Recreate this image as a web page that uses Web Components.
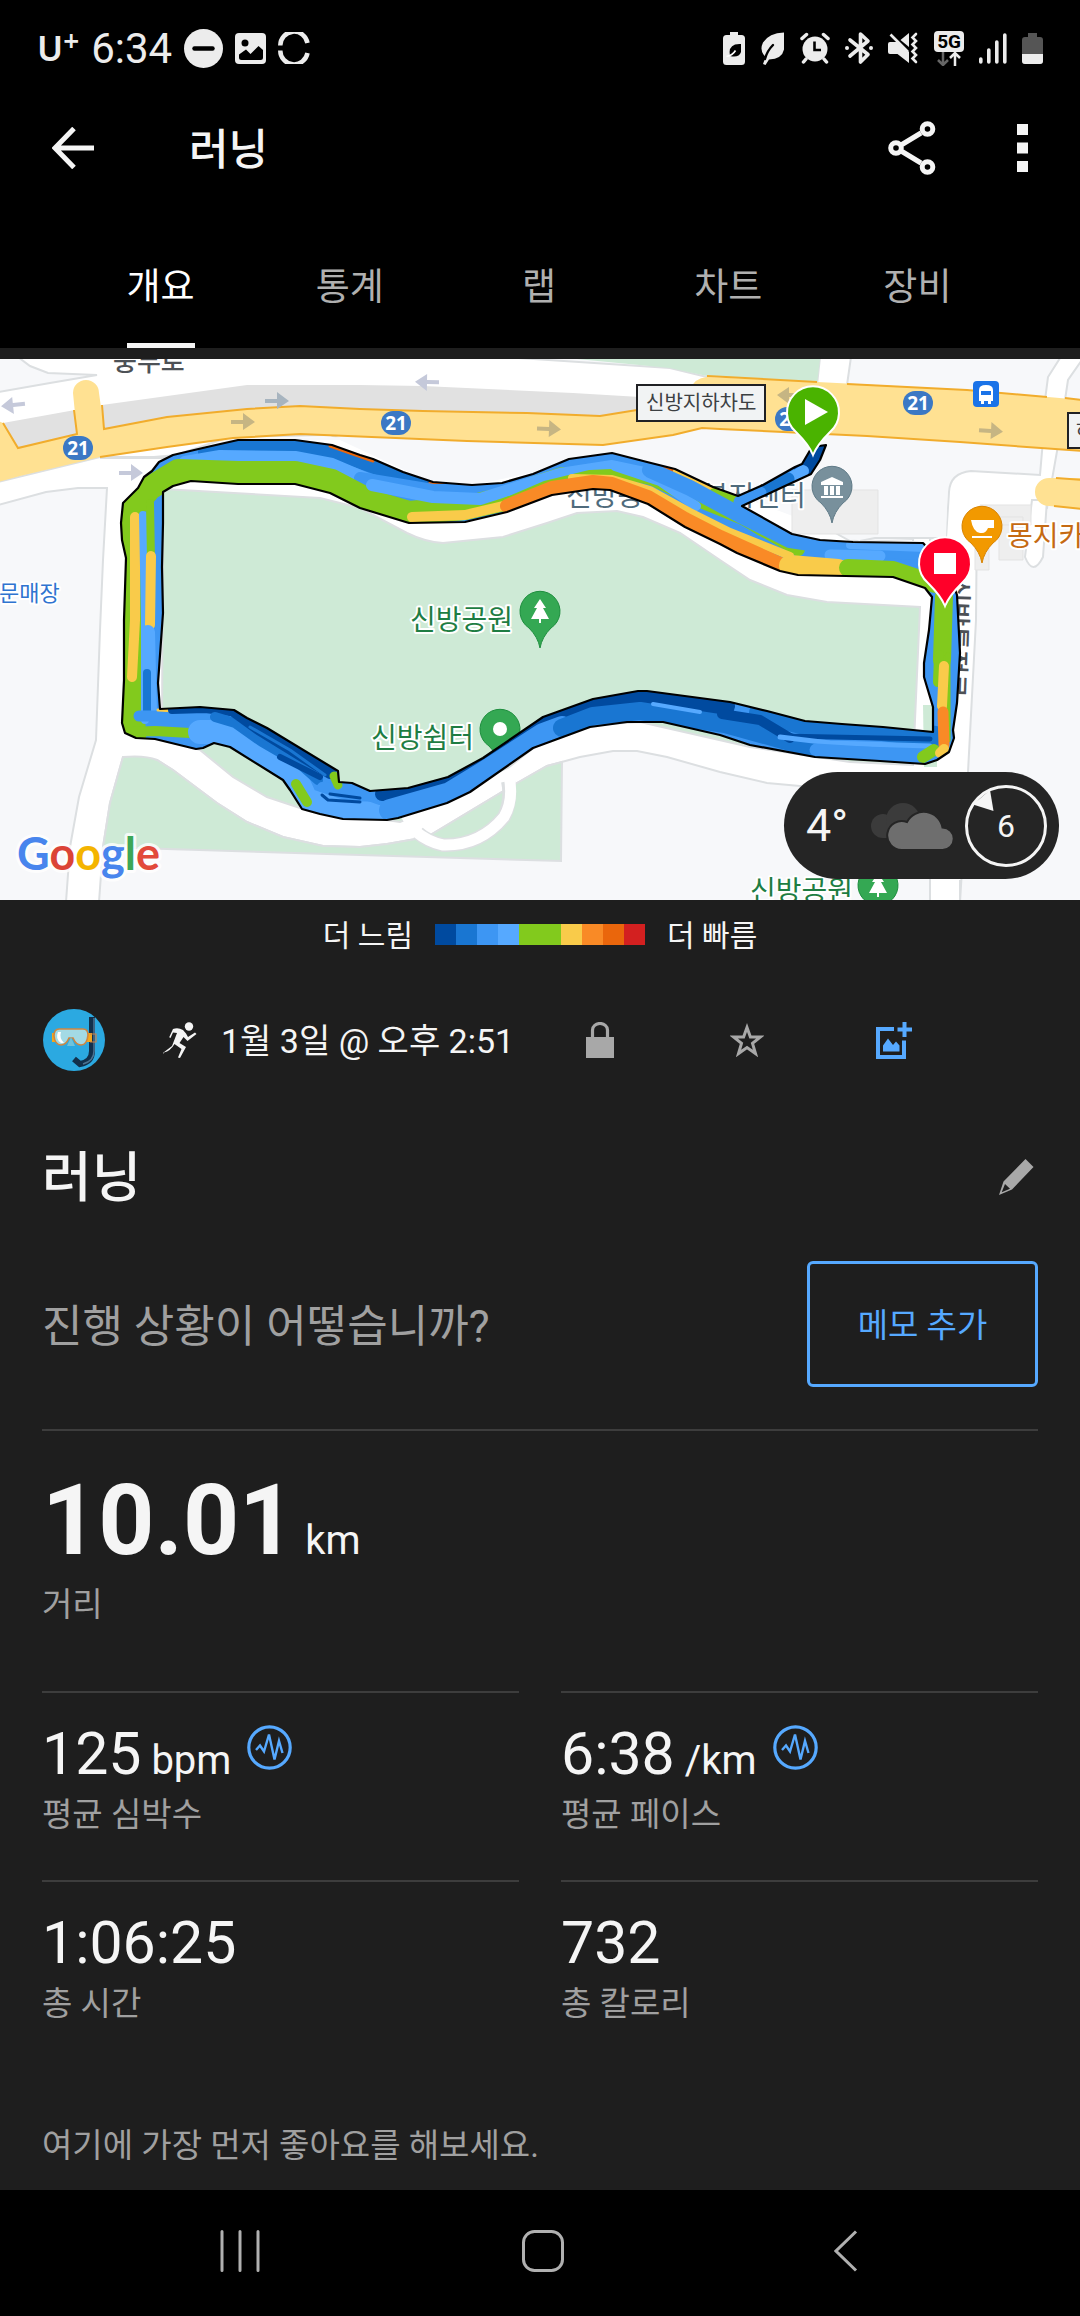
<!DOCTYPE html>
<html lang="ko">
<head>
<meta charset="utf-8">
<meta name="viewport" content="width=device-width, initial-scale=1">
<title>러닝</title>
<style>
html, body {
  margin: 0;
  background: #000;
}
body {
  font-family: Roboto, "Noto Sans CJK KR", sans-serif;
  color: #f5f5f5;
}
</style>
</head>
<body>
<activity-shell></activity-shell>

<script>
const icons = {
  dnd: [39, 39, '<circle cx="19.500" cy="19.500" r="19.500"/><path d="M10.500 19.500h18" stroke="#000" stroke-width="4.500" stroke-linecap="round"/>'],
  image: [31, 31, '<rect width="31" height="31" rx="4"/><circle cx="10" cy="10" r="3.500" fill="#000"/><path d="M4 24.500v-3l7-5 4.500 4.500 8-8 4.500 4v7.500q0 2.500-2.500 2.500h-19Q4 27 4 24.500z" fill="#000"/>'],
  ring: [32, 32, '<g fill="none" stroke="currentColor" stroke-width="4.500"><path d="M2.300 13.500A13.700 13.700 0 0 1 29.500 11"/><path d="M2.300 18.500A13.700 13.700 0 0 0 29.500 21"/></g>'],
  batteryLeaf: [22, 33, '<path d="M7 0h8v3h3.500Q22 3 22 6.500v23Q22 33 18.500 33h-15Q0 33 0 29.500v-23Q0 3 3.500 3H7z"/><path d="M18 12v8q-2 6-11 4-2-9 5-11.500 3-.8 6-.5z" fill="#000"/><path d="M3.500 24.500q6-1 9-6" fill="none" stroke="#fff" stroke-width="1.600"/>'],
  leaf: [25, 33, '<path d="M24 .5v17Q22 27 9 27.500L5.500 33 3 32 5.500 25Q-1 19 3 10.500 9 1 24 .5z"/><path d="M5 27q2-8 8-14" fill="none" stroke="#000" stroke-width="2.400" stroke-linecap="round"/>'],
  alarm: [30, 32, '<circle cx="15" cy="17" r="12.500"/><g fill="none" stroke="currentColor" stroke-width="3.500" stroke-linecap="round"><path d="M2 6.500l4.500-4M28 6.500l-4.500-4M6 27l-2.500 3M24 27l2.500 3"/></g><path d="M14.500 9.500v8.500H21" fill="none" stroke="#000" stroke-width="2.600"/>'],
  bluetooth: [28, 34, '<path d="M5 9l18 14.500L15.500 31V3L23 10 5 25" fill="none" stroke="currentColor" stroke-width="3.600" stroke-linejoin="round" stroke-linecap="round"/><circle cx="2" cy="17" r="2"/><circle cx="26" cy="17" r="2"/>'],
  mute: [31, 32, '<path d="M0 12q0-2 2-2h7l12 10v11L9.500 22H2q-2 0-2-2zM21 1v14l-8.500-7z"/><path d="M2.500 2.500L20 20" stroke="currentColor" stroke-width="2.600"/><path d="M28 2l-3.500 3.500L28 9l-3.500 3.500L28 16l-3.500 3.500L28 23l-3.500 3.500L28 30" fill="none" stroke="currentColor" stroke-width="2.600" stroke-linecap="round"/>'],
  signal: [28, 31, '<path d="M1.800 26v3M9.800 17v12M17.800 9v20M25.800 2v27" stroke="currentColor" stroke-width="3.600" stroke-linecap="round" fill="none"/>'],
  battery: [21, 31, '<path d="M6 0h9v4h3q3 0 3 3v21q0 3-3 3H3q-3 0-3-3V7q0-3 3-3h3z" fill="#555"/><path d="M0 21h21v7q0 3-3 3H3q-3 0-3-3z"/>'],
  arrowBack: [42, 42, '<path d="M22 1.500L3 21l19 19.500M3 21h39" fill="none" stroke="currentColor" stroke-width="5"/>'],
  share: [48, 54, '<g fill="none" stroke="currentColor" stroke-width="5"><path d="M14 23.500L33 12M14 30.500L33 42"/><circle cx="8" cy="27" r="5.300"/><circle cx="39.500" cy="8" r="5.300"/><circle cx="39.500" cy="46" r="5.300"/></g>'],
  more: [11, 49, '<path d="M0 0h11v11H0zM0 18.500h11v11H0zM0 37h11v11H0z"/>'],
  run: [34, 36, '<circle cx="26" cy="4.500" r="4.200"/><path d="M10 7q5-2 10 1l3 3.500 2 3.500 7-4.500 1.500 1.500-9 7-4-4-4 6 6.500 4-6 11-2-.5 3.500-8.500-7-5q-4 7-10.500 8.500L.5 32l-.3-1.200L9 24l5-13-4-.5-2.500 5.500-1.300-.8z"/>'],
  lock: [28, 36, '<path d="M0 15h28v21H0z"/><path d="M6.500 16V8a7.500 6.500 0 0 1 15 0v8" fill="none" stroke="currentColor" stroke-width="3.200"/>'],
  star: [34, 34, '<path d="M17 4.500l3.400 9.600h9.800l-7.700 6.300 3 10.200-8.500-6-8.500 6 3-10.200-7.700-6.300h9.800z" fill="none" stroke="currentColor" stroke-width="3"/>'],
  photoAdd: [36, 37, '<path d="M18 7H2v28h26V18.500" fill="none" stroke="currentColor" stroke-width="4"/><path d="M28.500 0v15M21.500 7.500h15" stroke="currentColor" stroke-width="4"/><path d="M7 29.500v-6l5-7 5 6.500 3-3.500 3.500 4v6z"/>'],
  pencil: [35, 36, '<path d="M26.500 0l8 8-21.500 22.500L0 36l4.500-13.500zM2.700 33.300l8.300-3.600-5-4.700z" fill-rule="evenodd"/>'],
  pulse: [45, 45, '<g fill="none" stroke="currentColor"><circle cx="22.500" cy="22.500" r="20.700" stroke-width="3.200"/><path d="M9 25l4-4.500 4 6 5-17 5.500 25 4.500-18.500 3.500 12" stroke-width="2.400"/></g>'],
  recents: [40, 42, '<path d="M2 1.500v39M20 1.500v39M38 1.500v39" stroke="currentColor" stroke-width="3" stroke-linecap="round"/>'],
  home: [42, 42, '<rect x="1.500" y="1.500" width="39" height="39" rx="11" fill="none" stroke="currentColor" stroke-width="3"/>'],
  navBack: [24, 42, '<path d="M22 1.500L2 21l20 19.500" fill="none" stroke="currentColor" stroke-width="3"/>'],
  clouds: [82, 48, '<g fill="#3b3b3b"><circle cx="12" cy="24" r="12"/><circle cx="32" cy="18" r="17"/><path d="M12 24h30v12H12z"/></g><path d="M31 48a14.500 14.500 0 1 1 5-28 19 19 0 0 1 35.500 5.500 11 11 0 0 1 0 22.500z" fill="#6e6e6e" stroke="#252525" stroke-width="2"/>'],
  wind: [82, 82, '<circle cx="41" cy="41" r="39.500" fill="none" stroke="currentColor" stroke-width="3"/><path d="M8 19.500L25 5l3.500 21z"/>'],
  avatar: [62, 62, `<circle cx="31" cy="31" r="31" fill="#2ba9e1"/>
    <path d="M49 8v34q0 11-12 13l-6-5" fill="none" stroke="#12304b" stroke-width="6"/>
    <path d="M51 9v33q0 10-11 13" fill="none" stroke="#4d7391" stroke-width="1.500"/>
    <path d="M9 24h5v9H9zM44 24h5v9h-5z" fill="#f4a81d"/><path d="M47 25h6v8h-6" fill="none" stroke="#c8814a" stroke-width="1.200"/>
    <path d="M16 20h24q5 0 5 6-1 10-7 10-5 0-8-7h-4q-3 7-8 7-6 0-7-9 0-7 5-7z" fill="#a3dae5" stroke="#cf8640" stroke-width="1.600"/>
    <path d="M15 23q-3 7 3 11h3q-5-5-3-11z" fill="#fff"/><path d="M28 28l4 9h-8z" fill="#6fc3dc"/>`]
}

const reset = `
button, a {
  display: flex;
  align-items: center;
  justify-content: center;
  margin: 0;
  padding: 0;
  border: 0;
  background: none;
  color: inherit;
  font: inherit;
  text-decoration: none;
}
`

const define = (name, template) => customElements.define(name, class extends HTMLElement {
  constructor() {
    super()
    this.attachShadow({mode: 'open'})
    this.shadowRoot.innerHTML = template
  }
})

customElements.define('app-icon', class extends HTMLElement {
  static get observedAttributes() {
    return ['name']
  }

  constructor() {
    super()
    this.attachShadow({mode: 'open'})
  }

  attributeChangedCallback(name, oldValue, newValue) {
    const [width, height, shape] = icons[newValue]
    this.shadowRoot.innerHTML = `
    <style>
    :host {
      display: inline-flex;
      flex: none;
    }
    svg {
      display: block;
    }
    </style>
    <svg width="${width}" height="${height}" viewBox="0 0 ${width} ${height}" fill="currentColor" aria-hidden="true">${shape}</svg>
    `
  }
})

define('status-bar', `
<style>
:host {
  display: flex;
  align-items: center;
  justify-content: space-between;
  height: 96px;
  padding: 0 37px;
  color: #ececec;
}
.left, .right {
  display: flex;
  align-items: center;
}
.left {
  gap: 12px;
  font-size: 42px;
}
.right {
  gap: 15px;
}
.carrier {
  display: flex;
  font: 600 35px "Noto Sans", sans-serif;
  line-height: 40px;
}
sup {
  font-size: 28px;
  line-height: 24px;
  vertical-align: top;
}
.network {
  display: grid;
  justify-items: center;
}
.badge {
  padding: 0 3px;
  border-radius: 4px;
  background: #ececec;
  color: #000;
  font-size: 19px;
  font-weight: 700;
  line-height: 21px;
}
</style>
<div class="left">
  <span class="carrier">U<sup>+</sup></span>
  <time>6:34</time>
  <app-icon name="dnd"></app-icon>
  <app-icon name="image"></app-icon>
  <app-icon name="ring"></app-icon>
</div>
<div class="right">
  <app-icon name="batteryLeaf"></app-icon>
  <app-icon name="leaf"></app-icon>
  <app-icon name="alarm"></app-icon>
  <app-icon name="bluetooth"></app-icon>
  <app-icon name="mute"></app-icon>
  <span class="network">
    <span class="badge">5G</span>
    <svg width="24" height="14" viewBox="0 0 24 14" fill="none" stroke-width="2.500"><path d="M6 0v12M1 8l5 5 5-5" stroke="#666"/><path d="M18 14V2M13 6l5-5 5 5" stroke="#ececec"/></svg>
  </span>
  <app-icon name="signal"></app-icon>
  <app-icon name="battery"></app-icon>
</div>
`)

define('app-bar', `
<style>
${reset}
:host {
  display: flex;
  align-items: center;
  height: 104px;
  padding: 0 52px;
}
h1 {
  flex: 1;
  margin: 0 0 0 95px;
  padding-top: 4px;
  font-size: 43px;
  font-weight: 500;
  line-height: 60px;
}
.actions {
  display: flex;
  gap: 81px;
}
</style>
<button type="button" aria-label="뒤로"><app-icon name="arrowBack"></app-icon></button>
<h1><slot></slot></h1>
<div class="actions">
  <button type="button" aria-label="공유"><app-icon name="share"></app-icon></button>
  <button type="button" aria-label="더보기"><app-icon name="more"></app-icon></button>
</div>
`)

define('tab-bar', `
<style>
:host {
  display: grid;
  grid-template-columns: repeat(5, 1fr);
  height: 148px;
  padding: 0 68px 0 66px;
  border-bottom: 11px solid #1e1e1e;
}
</style>
<slot></slot>
`)

define('tab-item', `
<style>
${reset}
:host {
  display: flex;
  justify-content: center;
  color: #b0b0b0;
}
button {
  box-sizing: border-box;
  padding-top: 24px;
  font-size: 37px;
  border-bottom: 5px solid transparent;
}
:host([selected]) {
  color: #fff;
}
:host([selected]) button {
  border-color: #f5f5f5;
}
</style>
<button type="button"><slot></slot></button>
`)

// Outline of all laps together: outer edge, then the hole in the middle.
const band = `M123 503L138 488 144 477 152 471 159 462 173 455 207 447 238 440 295 440 332 445 360 455 373 459 403 472 433 482 472 485 502 483 533 474 569 459 612 453 647 462 675 469 713 487 738 496 763 485 795 467 802 464 812 447 826 445 820 460 811 474 785 486 742 506 792 534 820 540 853 542 923 543 948 570 957 595 960 653 957 703 953 730 954 738 949 752 937 760 925 764 880 761 815 757 750 745 720 735 663 722 627 722 590 727 533 748 470 792 447 803 398 818 387 820 343 819 320 814 302 809 290 790 283 780 230 747 214 743 203 748 196 749 155 739 136 738 125 733 122 723 124 680 124 620 126 558 122 540 121 523z
M163 492L173 486 191 481 238 484 295 484 330 493 360 508 409 523 465 522 507 512 552 495 593 489 610 490 648 504 685 527 720 544 737 553 780 571 798 575 893 577 925 588 932 597 929 630 924 663 924 677 933 707 933 732 883 727 842 724 805 721 767 711 730 702 647 691 638 691 593 699 543 717 483 758 448 777 408 788 370 791 352 783 339 782 338 771 267 728 247 718 234 710 200 707 160 709 158 683 163 613 162 567 163 523z`

// Pace colour, width, points.
const laps = [
  ['#1976d2', 14, '205,452 238,446 295,446 332,452 380,469 433,486 480,489'],
  ['#ea660c', 3, '330,446 373,461'],
  ['#ea660c', 4, '430,484 500,486'],
  ['#56a9ff', 12, '165,480 185,462 220,456 295,457 332,464 372,481 433,498'],
  ['#3d96f3', 12, '360,478 433,490 500,489 540,477 580,465'],
  ['#82ca1d', 24, '134,737 132,690 133,570 131,510 150,488 178,471 238,473 295,473 332,481 372,502 409,513 465,508 500,500 545,485 563,479'],
  ['#56a9ff', 12, '372,485 433,497 480,499 515,488 560,474 612,466 650,474'],
  ['#82ca1d', 8, '505,502 545,485 590,474 612,473 650,481 690,500 740,520 800,551'],
  ['#82ca1d', 14, '713,499 760,528 798,549'],
  ['#56a9ff', 10, '615,466 660,481 696,506'],
  ['#f9cb4a', 10, '412,517 465,515 503,506'],
  ['#f9cb4a', 8, '572,478 612,479 650,490 690,512 730,532 790,556'],
  ['#f98a26', 14, '507,506 552,488 593,482 612,484 648,497 685,519 720,537 780,564'],
  ['#ea660c', 4, '655,464 680,472'],
  ['#f9cb4a', 6, '676,471 712,490'],
  ['#82ca1d', 14, '715,495 738,502'],
  ['#3d96f3', 16, '650,470 690,488 740,515 790,540 850,549 925,552'],
  ['#56a9ff', 8, '850,545 925,548'],
  ['#56a9ff', 11, '830,555 880,556'],
  ['#f9cb4a', 22, '790,566 838,570'],
  ['#f9cb4a', 10, '835,570 847,570'],
  ['#82ca1d', 18, '848,568 893,570 935,584'],
  ['#004a9f', 24, '818,445 806,470'],
  ['#56a9ff', 12, '803,471 790,479'],
  ['#1976d2', 13, '788,479 764,491'],
  ['#3d96f3', 13, '760,493 740,502'],
  ['#f9cb4a', 10, '135,517 135,620 132,677'],
  ['#56a9ff', 8, '143,515 145,620 145,720'],
  ['#82ca1d', 8, '150,503 151,560'],
  ['#f9cb4a', 10, '151,556 150,625'],
  ['#56a9ff', 14, '148,632 150,712'],
  ['#1976d2', 8, '147,673 147,712'],
  ['#3d96f3', 11, '139,716 215,716'],
  ['#f9cb4a', 3, '158,710 175,711'],
  ['#004a9f', 8, '172,710 205,709 238,713'],
  ['#82ca1d', 10, '130,732 155,731 190,733'],
  ['#56a9ff', 24, '200,732 225,732 258,752 296,778 306,800 345,813 387,814'],
  ['#1976d2', 10, '215,717 235,723 262,742 300,764 318,780'],
  ['#004a9f', 12, '235,712 260,730 330,773'],
  ['#004a9f', 6, '280,757 320,777'],
  ['#1976d2', 3, '250,727 290,750 325,775'],
  ['#3d96f3', 10, '322,787 352,790 380,800'],
  ['#004a9f', 3, '322,795 328,800 360,802'],
  ['#004a9f', 3, '330,794 360,798'],
  ['#82ca1d', 9, '334,776 338,785'],
  ['#82ca1d', 10, '296,784 307,802'],
  ['#004a9f', 14, '382,794 410,792 450,781'],
  ['#004a9f', 20, '450,776 486,756 543,721 600,703 640,696 725,706'],
  ['#3d96f3', 22, '390,810 450,793 486,771 543,734 562,727'],
  ['#1976d2', 18, '562,728 593,716 640,711 725,724 815,749'],
  ['#56a9ff', 4, '653,704 700,712'],
  ['#1976d2', 22, '760,713 805,724 883,730 935,737'],
  ['#004a9f', 10, '722,714 760,720 790,738'],
  ['#004a9f', 5, '780,736 930,739'],
  ['#56a9ff', 5, '780,737 830,743 930,746'],
  ['#3d96f3', 13, '816,750 880,754 930,757'],
  ['#82ca1d', 18, '944,596 942,660'],
  ['#82ca1d', 10, '939,655 938,682'],
  ['#82ca1d', 5, '948,655 948,740'],
  ['#f9cb4a', 10, '944,666 942,706'],
  ['#f98a26', 11, '943,712 944,745'],
  ['#82ca1d', 12, '923,757 934,750'],
  ['#f9cb4a', 10, '944,749 940,753']
]

const polyline = ([color, width, points]) =>
  `<polyline points="${points}" stroke="${color}" stroke-width="${width}"/>`

const shield = (x, y) =>
  `<rect x="${x - 15}" y="${y - 12}" width="30" height="24" rx="12" fill="#3b78c4"/><text x="${x}" y="${y + 7}" class="shield">21</text>`

const arrow = (x, y, color, turn = 0) =>
  `<path d="M-12-2H0v-7L12 0 0 8V2h-12z" fill="${color}" transform="translate(${x} ${y}) rotate(${turn})"/>`

const poi = (x, y, fill, edge) =>
  `<path d="M${x} ${y + 37}q-2-11-11-20a20 20 0 1 1 22 0q-9 9-11 20z" fill="${fill}" stroke="${edge}"/>`

const tree = (x, y) => `${poi(x, y, '#34a853', '#1e8e3e')}
  <path d="M${x} ${y - 12}l6 9h-3l6 11h-8v4h-2v-4h-8l6-11h-3z" fill="#fff"/>`

const pin = (x, y, fill) =>
  `<path d="M${x} ${y + 43}q-4-10-17-23a26 26 0 1 1 34 0q-13 13-17 23z" fill="${fill}" stroke="#fff" stroke-width="2"/>`

define('route-map', `
<style>
:host {
  display: block;
  position: relative;
}
svg {
  display: block;
  width: 100%;
  height: auto;
}
text {
  font: 400 28px "Noto Sans CJK KR", sans-serif;
  stroke: #fff;
  stroke-width: 4px;
  stroke-linejoin: round;
  paint-order: stroke;
}
.park {
  fill: #1e7d43;
}
.place {
  fill: #4f6b7c;
}
.cafe {
  fill: #c56a12;
}
.shop {
  font-size: 22px;
  fill: #2f74d0;
}
.road {
  font-size: 26px;
  font-weight: 500;
  fill: #4d5156;
}
.sign {
  font-size: 20px;
  fill: #3c4043;
  stroke: none;
}
.shield {
  font: 700 19px "Noto Sans", sans-serif;
  fill: #fff;
  stroke: none;
  text-anchor: middle;
}
.logo {
  font: 700 45px Lato, sans-serif;
  stroke-width: 6px;
  stroke-opacity: .8;
}
slot {
  position: absolute;
  right: 21px;
  bottom: 21px;
  display: block;
}
</style>
<svg viewBox="0 359 1080 541" role="img" aria-label="러닝 경로 지도">
  <defs><clipPath id="band"><path d="${band}" clip-rule="evenodd"/></clipPath></defs>
  <rect y="359" width="1080" height="541" fill="#f7f8fa"/>

  <g fill="#fff" stroke="#dcdfe1" stroke-width="2">
    <path d="M-2 392L50 383 97 375 48 373 30 366 18 357H503L670 368 707 377V400L360 440-2 470z"/>
    <path d="M820 357L817 385H847L851 357zM1062 355L1048 377 1045 400H1065L1068 380 1084 357z"/>
    <path d="M-2 505L46 492 78 488H107L103 560 100 630 96 740 79 797 70 847 66 902H99L103 847 110 803 123 757 157 760 173 770 217 803 247 822 283 837 323 846 360 847 387 844 427 837 517 783 547 766 580 757 613 751 637 751 667 757 720 772 767 783 800 786 930 795V902H960L968 772 976 620 977 508H1047L1059 440H1043L1040 475 971 471Q950 473 949 492L946 538 850 541 740 480 600 440 430 470 330 435 230 437 170 457 100 457-2 482z"/>
    <path d="M913 541L915 507Q922 490 930 507V541"/>
    <path d="M1047 500L1043 557Q1033 577 1025 557L1032 500z"/>
  </g>
  <path d="M165 459L240 440 340 440 430 482 470 486 530 473 570 459 612 453 720 489 860 541 946 538 948 480 880 436 702 428 603 445 360 437 233 438z" fill="#f7f8fa"/>
  <path d="M792 490H878V534H792zM980 505H1031V525H980zM999 517H1023V560H999zM975 545H989V570H975z" fill="#eee" stroke="#e3e3e3"/>
  <path d="M960 903V880M100 458L170 458M860 541L875 538H946" fill="none" stroke="#dcdfe1" stroke-width="2"/>

  <path d="M577 359H820L817 383 707 376 670 368z" fill="#ceead6"/>
  <path d="M3 423L75 410 102 405 247 385H360L423 386 573 393 640 397V425L300 415 18 452z" fill="#e1e1e1"/>

  <g fill="#ceead6" stroke="#dcdfe1" stroke-width="2">
    <path d="M163 489L320 498 360 508 407 533Q425 542 443 543L503 537 547 523 577 513 617 511 643 517 680 533 720 560 750 580 787 595 827 602 920 607 913 765 850 762 750 747 640 722 560 727 480 790 400 822 300 808 267 797 233 777 200 750 162 738z"/>
    <path d="M123 757Q145 755 157 760L173 770 217 803 247 822 283 837 323 846 360 847 387 844 427 837 517 783 547 766 562 762 561 861 360 855 103 847 110 803z"/>
  </g>
  <path d="M923 705H937V767H924z" fill="#ceead6"/>
  <path d="M508 781Q512 800 504 817 480 846 443 845 428 842 418 833" fill="none" stroke="#dcdfe1" stroke-width="14"/>
  <path d="M509 776Q514 800 504 817 480 846 443 845 428 842 415 831" fill="none" stroke="#fff" stroke-width="11"/>
  <path d="M410 833L420 828 518 772 510 768 400 815z" fill="#fff"/>

  <path d="M-2 421L3 423 18 448 77 434 73 393A13 13 0 0 1 99 393L104 429 167 417 247 409 300 406 360 409 423 411 527 413 600 416 637 410 690 395V390Q694 378 707 377L817 382 857 384 967 390 1082 400V451L960 442 867 436 720 429 702 428 673 435 603 445 467 441 300 434 233 438 167 447 100 457 20 476-2 482z" fill="#ffe192"/>
  <g fill="none" stroke="#f1ac2c" stroke-width="2">
    <path d="M3 423L18 448 77 434 74 410M102 405L104 429 167 417 247 409 300 406 360 409 423 411 527 413 600 416 637 410M707 376L817 382M847 384L967 390 1047 397M1065 398L1082 400M1082 451L960 442 867 436 720 429 702 428 673 435 603 445 467 441 300 434 233 438 167 447 100 457"/>
  </g>
  <path d="M1082 478H1049A14 14 0 0 0 1049 506L1082 509z" fill="#ffe192"/>
  <path d="M1056 478L1082 480M1054 506L1082 509" stroke="#f1ac2c" stroke-width="2"/>

  ${arrow(13, 405, '#c5c9da', 174)}
  ${arrow(131, 473, '#c5c9da')}
  ${arrow(277, 401, '#a7b4bf')}
  ${arrow(243, 422, '#c6b583')}
  ${arrow(427, 382, '#c5c9da', 181)}
  ${arrow(549, 429, '#c6b583', 2)}
  ${arrow(789, 395, '#c6b583', 180)}
  ${arrow(991, 431, '#c6b583', 3)}
  ${shield(78, 448)}
  ${shield(396, 423)}
  ${shield(790, 419)}
  ${shield(918, 403)}

  <text x="113" y="371" class="road">중부로</text>
  <text class="road" transform="translate(950 578) rotate(92)">신방통정로</text>
  <text x="-1" y="601" class="shop">문매장</text>
  <text x="566" y="506" class="place">신방동 행정복지센터</text>
  <text x="410" y="630" class="park">신방공원</text>
  <text x="371" y="748" class="park">신방쉼터</text>
  <text x="750" y="901" class="park">신방공원</text>
  <text x="1007" y="546" class="cafe">몽지카</text>

  ${tree(540, 611)}
  ${tree(878, 885)}
  ${poi(500, 729, '#34a853', '#1e8e3e')}<circle cx="500" cy="729" r="7" fill="#fff"/>
  ${poi(832, 486, '#78909c', '#5f7a87')}
  <path d="M821 482l11-5 11 5v3h-22zM824 486h4v9h-4zM830 486h4v9h-4zM836 486h4v9h-4zM821 496h22v2h-22z" fill="#fff"/>
  ${poi(982, 526, '#f29900', '#d98300')}
  <path d="M971 520h23v8h-6q-2 5-6 5h-2q-7-1-9-13zM972 536h20v2h-20z" fill="#fff"/>
  <rect x="973" y="381" width="26" height="26" rx="4" fill="#1a73e8"/>
  <path d="M979 390q0-5 7-5t7 5v11h-2v3h-3v-3h-4v3h-3v-3h-2zM981 391v4h10v-4z" fill="#fff" fill-rule="evenodd"/>
  <path d="M637 385H765V421H637zM1068 413H1090V448H1068z" fill="#f1f3f4" stroke="#202124" stroke-width="2"/>
  <text x="646" y="410" class="sign">신방지하차도</text>
  <text x="1076" y="438" class="sign">하</text>

  <g clip-path="url(#band)">
    <path d="${band}" fill="#3d96f3" fill-rule="evenodd"/>
    <g fill="none" stroke-linecap="round" stroke-linejoin="round">${laps.map(polyline).join('')}</g>
  </g>
  <path d="${band}" fill="none" stroke="#000" stroke-width="2.200" stroke-linejoin="round"/>

  ${pin(813, 412, '#4ab300')}
  <path d="M805 399L828 412 805 425z" fill="#fff"/>
  ${pin(945, 563, '#ff0029')}
  <path d="M934 553h22v21h-22z" fill="#fff"/>

  <text x="17" y="870" class="logo"><tspan fill="#4885ed">G</tspan><tspan fill="#db4437">o</tspan><tspan fill="#f4b400">o</tspan><tspan fill="#4885ed">g</tspan><tspan fill="#3ca757">l</tspan><tspan fill="#e24a3b">e</tspan></text>
</svg>
<slot></slot>
`)

define('weather-badge', `
<style>
:host {
  display: flex;
  align-items: center;
  gap: 12px;
  box-sizing: border-box;
  height: 107px;
  padding: 0 12px 0 22px;
  border-radius: 54px;
  background: #252525;
  font-size: 45px;
}
.wind {
  display: grid;
  place-items: center;
  font-size: 32px;
}
.wind > * {
  grid-area: 1 / 1;
}
app-icon[name="clouds"] {
  margin-left: 11px;
}
</style>
<span>4°</span>
<app-icon name="clouds"></app-icon>
<span class="wind"><app-icon name="wind"></app-icon><span>6</span></span>
`)

define('pace-legend', `
<style>
:host {
  display: flex;
  align-items: center;
  justify-content: center;
  gap: 22px;
  height: 68px;
  font-size: 30px;
}
.label {
  padding-bottom: 3px;
}
.scale {
  display: flex;
}
i {
  width: 21px;
  height: 21px;
  background: var(--pace);
}
</style>
<span class="label">더 느림</span>
<span class="scale">
  <i style="--pace: #004a9f"></i><i style="--pace: #1976d2"></i><i style="--pace: #3d96f3"></i><i style="--pace: #56a9ff"></i><i style="--pace: #82ca1d"></i><i style="--pace: #82ca1d"></i><i style="--pace: #f9cb4a"></i><i style="--pace: #f98a26"></i><i style="--pace: #ea660c"></i><i style="--pace: #d32020"></i>
</span>
<span class="label">더 빠름</span>
`)

define('activity-meta', `
<style>
${reset}
:host {
  display: flex;
  align-items: center;
  height: 144px;
  padding-left: 1px;
  font-size: 34px;
}
.when {
  display: flex;
  align-items: center;
  gap: 24px;
  margin-left: 58px;
}
.date {
  padding-bottom: 3px;
}
.actions {
  flex: 1;
  display: grid;
  grid-template-columns: repeat(3, 147px);
  margin-left: 12px;
  color: #a8a8a8;
}
.add {
  color: #56a9ff;
}
</style>
<a href="#profile" aria-label="프로필"><app-icon name="avatar"></app-icon></a>
<span class="when"><app-icon name="run"></app-icon><span class="date"><slot></slot></span></span>
<div class="actions">
  <button type="button" aria-label="공개 설정"><app-icon name="lock"></app-icon></button>
  <button type="button" aria-label="즐겨찾기"><app-icon name="star"></app-icon></button>
  <button type="button" class="add" aria-label="사진 추가"><app-icon name="photoAdd"></app-icon></button>
</div>
`)

define('activity-title', `
<style>
${reset}
:host {
  display: flex;
  align-items: center;
  justify-content: space-between;
  height: 130px;
  padding-right: 4px;
}
h2 {
  margin: 0;
  padding-top: 4px;
  font-size: 54px;
  font-weight: 500;
  line-height: 72px;
}
button {
  color: #a8a8a8;
}
</style>
<h2><slot></slot></h2>
<button type="button" aria-label="이름 편집"><app-icon name="pencil"></app-icon></button>
`)

define('note-row', `
<style>
${reset}
:host {
  display: flex;
  align-items: center;
  justify-content: space-between;
  padding: 19px 0 42px;
  color: #a0a0a0;
  font-size: 44px;
}
.question {
  padding-bottom: 3px;
}
button {
  box-sizing: border-box;
  width: 231px;
  height: 126px;
  padding-bottom: 3px;
  border: 3px solid #56a9ff;
  border-radius: 6px;
  color: #56a9ff;
  font-size: 33px;
}
</style>
<span class="question"><slot></slot></span>
<button type="button">메모 추가</button>
`)

define('stat-item', `
<style>
:host {
  display: block;
  padding: 27px 0 45px;
  border-top: 2px solid #3d3d3d;
}
.value {
  display: flex;
  align-items: flex-start;
  gap: 16px;
  height: 68px;
  font-size: 59px;
  line-height: 68px;
}
app-icon {
  margin-top: 5px;
  color: #56a9ff;
}
:host(:not([zones])) app-icon {
  display: none;
}
.label {
  margin-top: 7px;
  color: #a0a0a0;
  font-size: 33px;
  line-height: 40px;
}
::slotted(small) {
  font-size: 40px;
  line-height: 40px;
}
:host([large]) {
  padding: 33px 0 66px;
}
:host([large]) .value {
  height: 114px;
  font-size: 98px;
  font-weight: 700;
  line-height: 114px;
}
:host([large]) ::slotted(small) {
  font-weight: 400;
}
</style>
<div class="value"><span><slot></slot></span><app-icon name="pulse"></app-icon></div>
<div class="label"><slot name="label"></slot></div>
`)

define('nav-bar', `
<style>
${reset}
:host {
  display: grid;
  grid-template-columns: repeat(3, 1fr);
  height: 126px;
  padding: 0 83px 0 88px;
  background: #000;
  color: #b0b0b0;
}
button {
  padding-bottom: 4px;
}
</style>
<button type="button" aria-label="최근 앱"><app-icon name="recents"></app-icon></button>
<button type="button" aria-label="홈"><app-icon name="home"></app-icon></button>
<button type="button" aria-label="뒤로"><app-icon name="navBack"></app-icon></button>
`)

define('activity-shell', `
<style>
:host {
  display: flex;
  flex-direction: column;
  min-height: 100vh;
}
header {
  background: #000;
}
main {
  flex: 1;
  background: #1e1e1e;
}
section {
  padding: 0 42px;
}
.stats {
  display: grid;
  grid-template-columns: 1fr 1fr;
  column-gap: 42px;
}
.wide {
  grid-column: 1 / -1;
}
p {
  margin: 57px 0 21px;
  color: #a0a0a0;
  font-size: 33px;
  line-height: 40px;
}
</style>
<header>
  <status-bar></status-bar>
  <app-bar>러닝</app-bar>
  <tab-bar>
    <tab-item selected>개요</tab-item>
    <tab-item>통계</tab-item>
    <tab-item>랩</tab-item>
    <tab-item>차트</tab-item>
    <tab-item>장비</tab-item>
  </tab-bar>
</header>
<main>
  <route-map><weather-badge></weather-badge></route-map>
  <pace-legend></pace-legend>
  <section>
    <activity-meta>1월 3일 @ 오후 2:51</activity-meta>
    <activity-title>러닝</activity-title>
    <note-row>진행 상황이 어떻습니까?</note-row>
    <div class="stats">
      <stat-item class="wide" large>10.01<small> km</small><span slot="label">거리</span></stat-item>
      <stat-item zones>125<small> bpm</small><span slot="label">평균 심박수</span></stat-item>
      <stat-item zones>6:38<small> /km</small><span slot="label">평균 페이스</span></stat-item>
      <stat-item>1:06:25<span slot="label">총 시간</span></stat-item>
      <stat-item>732<span slot="label">총 칼로리</span></stat-item>
    </div>
    <p>여기에 가장 먼저 좋아요를 해보세요.</p>
  </section>
</main>
<nav-bar></nav-bar>
`)
</script>
</body>
</html>
